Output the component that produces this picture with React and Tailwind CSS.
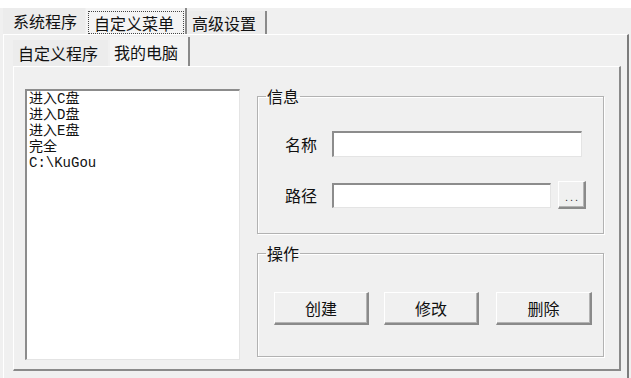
import React from 'react'

const cjk = { fontFamily: '"Noto Sans CJK SC", "Noto Sans", sans-serif' }

function Raised({ className = '', children }) {
  return (
    <div className={`flex items-center justify-center bg-[#f0f0f0] border-t border-l border-t-white border-l-white border-r-2 border-b-2 border-r-[#8a8a8a] border-b-[#8a8a8a] shadow-[inset_-1px_-1px_0_#b4b4b4] ${className}`}>
      {children}
    </div>
  )
}

function Sunken({ className = '', children }) {
  return (
    <div className={`bg-white border-t-2 border-l-2 border-t-[#8c8c8c] border-l-[#8c8c8c] border-r border-b border-r-[#e4e4e4] border-b-[#e4e4e4] ${className}`}>
      {children}
    </div>
  )
}

function Group({ title, className = '', children }) {
  return (
    <fieldset className={`border border-[#b2b2b2] shadow-[inset_1px_1px_0_#fff,1px_1px_0_#fff] ${className}`}>
      <legend className="ml-[8px] px-[1px] text-[16px] leading-[16px]">{title}</legend>
      {children}
    </fieldset>
  )
}

export default function App() {
  const items = ['进入C盘', '进入D盘', '进入E盘', '完全', 'C:\\KuGou']

  return (
    <div className="w-[631px] h-[378px] overflow-hidden bg-[#f0f0f0] text-[#111]" style={cjk}>
      <div className="h-[8px] bg-white" />

      {/* outer tabs */}
      <div className="h-[26px] flex pl-[3px] text-[16px] leading-[16px]">
        <div className="w-[82px] flex items-center pl-[10px] bg-[#ececec]">系统程序</div>
        <div className="ml-[1px] w-[101px] flex items-stretch bg-[#f4f4f4] border-r-2 border-r-[#8a8a8a] pl-[2px] pr-[1px] pt-[3px]">
          <div className="flex-1 flex items-center pl-[5px] border border-dotted border-[#444]">自定义菜单</div>
        </div>
        <div className="ml-[1px] w-[79px] flex items-center pl-[4px] bg-[#ececec] border-r-2 border-r-[#8a8a8a] mt-[3px]">高级设置</div>
      </div>

      {/* outer panel */}
      <div className="ml-[3px] mr-[2px] h-[344px] border-t border-l border-t-white border-l-white border-r-2 border-r-[#7c7c7c] pl-[9px] pt-[2px]">
        {/* inner tabs */}
        <div className="h-[29px] flex text-[16px] leading-[16px]">
          <div className="w-[95px] flex items-center pl-[5px] bg-[#ececec] mt-[3px]">自定义程序</div>
          <div className="ml-[2px] w-[80px] flex items-center pl-[4px] bg-[#f4f4f4] border-r-2 border-r-[#8a8a8a]">我的电脑</div>
        </div>

        {/* inner panel */}
        <div className="w-[608px] h-[305px] border-t border-l border-t-white border-l-white border-r-2 border-b-2 border-r-[#8a8a8a] border-b-[#8a8a8a] flex items-start pl-[11px] pt-[21px]">
          <Sunken className="mt-[1px] w-[215px] h-[271px] pl-[2px] pt-0">
            <div className="text-[14px] leading-[16px]" style={{ fontFamily: '"Liberation Mono", "Noto Sans CJK SC", monospace' }}>
              {items.map((t) => (
                <div key={t} className="whitespace-pre">{t}</div>
              ))}
            </div>
          </Sunken>

          <div className="ml-[17px] w-[347px] flex flex-col">
            <Group title="信息" className="h-[146px]">
              <div className="flex flex-col pt-[27px] pl-[27px]">
                <div className="h-[26px] flex items-center">
                  <span className="w-[32px] text-[16px] leading-[16px]">名称</span>
                  <Sunken className="ml-[15px] w-[250px] h-[26px]" />
                </div>
                <div className="mt-[24px] h-[28px] flex items-center">
                  <span className="w-[32px] text-[16px] leading-[16px]">路径</span>
                  <Sunken className="ml-[15px] w-[219px] h-[25px]" />
                  <Raised className="ml-[7px] w-[28px] h-[28px]">
                    <span className="text-[11px] leading-[11px] tracking-[2px] pl-[2px] pt-[6px] text-[#333]" style={{ fontFamily: '"Liberation Sans", sans-serif' }}>...</span>
                  </Raised>
                </div>
              </div>
            </Group>

            <Group title="操作" className="mt-[11px] h-[112px]">
              <div className="flex pt-[31px] pl-[16px] text-[16px] leading-[16px]">
                <Raised className="w-[95px] h-[33px]">创建</Raised>
                <Raised className="ml-[15px] w-[95px] h-[33px]">修改</Raised>
                <Raised className="ml-[17px] w-[96px] h-[33px]">删除</Raised>
              </div>
            </Group>
          </div>
        </div>
      </div>
    </div>
  )
}
